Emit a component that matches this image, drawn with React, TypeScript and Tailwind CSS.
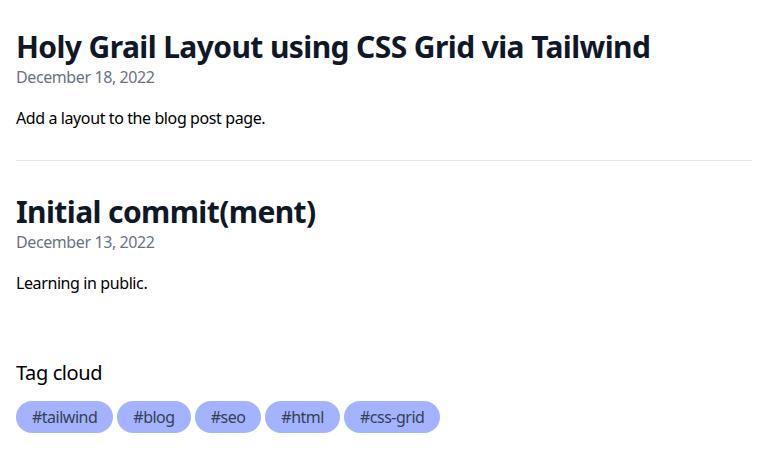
import React from 'react';

const posts = [
    {
        title: 'Holy Grail Layout using CSS Grid via Tailwind',
        date: 'December 18, 2022',
        summary: 'Add a layout to the blog post page.',
    },
    {
        title: 'Initial commit(ment)',
        date: 'December 13, 2022',
        summary: 'Learning in public.',
    },
];

const tags = ['tailwind', 'blog', 'seo', 'html', 'css-grid'];

export default function App() {
    return (
        <div className="min-h-screen bg-white px-4 pt-[29px] font-['Noto_Sans',sans-serif] tracking-[-0.4px] text-black">
            {posts.map((post, i) => (
                <div key={post.title}>
                    {i > 0 && <hr className="mt-[30px] mb-[33px] border-gray-200" />}
                    <article>
                        <h2 className="text-3xl font-bold tracking-[-0.6px] text-gray-900">{post.title}</h2>
                        <p className="text-gray-500">{post.date}</p>
                        <p className="mt-[17px]">{post.summary}</p>
                    </article>
                </div>
            ))}

            {/* Tag cloud */}
            <section className="mt-16">
                <h3 className="text-xl">Tag cloud</h3>
                <div className="mt-[14px] flex flex-wrap gap-1">
                    {tags.map((tag) => (
                        <span key={tag} className="rounded-full bg-indigo-300 px-4 py-1 tracking-[-0.5px] text-gray-700">
                            #{tag}
                        </span>
                    ))}
                </div>
            </section>
        </div>
    );
}
